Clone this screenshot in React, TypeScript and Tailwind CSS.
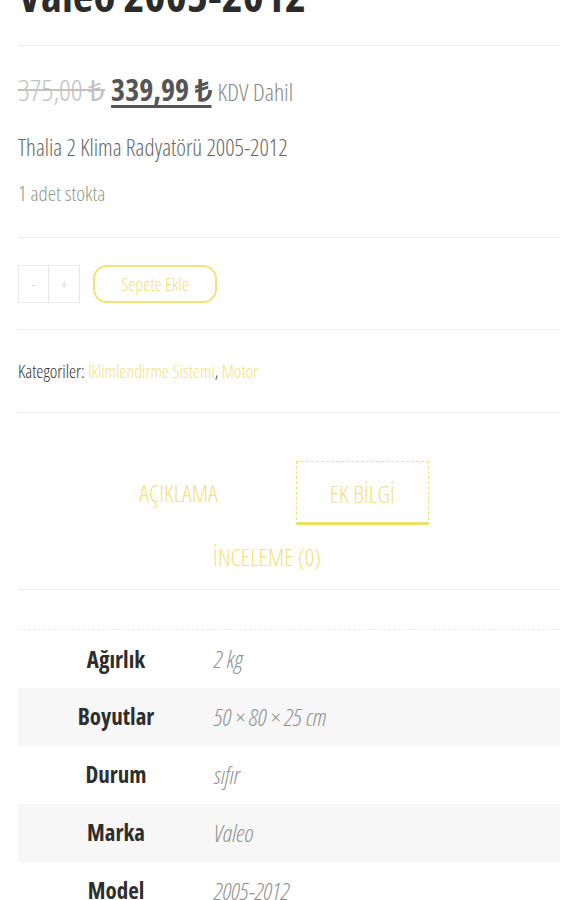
import React from "react";

const rows = [
  { label: "Ağırlık", value: "2 kg" },
  { label: "Boyutlar", value: "50 × 80 × 25 cm" },
  { label: "Durum", value: "sıfır" },
  { label: "Marka", value: "Valeo" },
  { label: "Model", value: "2005-2012" },
];

const tabs = ["AÇIKLAMA", "EK BİLGİ", "İNCELEME (0)"];

const App = () => {
  return (
    <div className="w-[578px] h-[900px] overflow-hidden bg-white font-['Open_Sans','Liberation_Sans_Narrow',sans-serif] [font-stretch:75%]">
      <div className="px-[18px]">
        <h1 className="-mt-[30px] pb-[25px] border-b border-[#eeeeee] text-[45px] leading-[50px] font-bold text-[#2b2b2b]">
          Valeo 2005-2012
        </h1>

        <div className="mt-[29px] flex items-baseline gap-[6px] leading-[30px]">
          <span className="text-[29px] font-light text-[#c2c2c2] line-through">375,00 ₺</span>
          <span className="text-[30px] font-bold text-[#555555] underline underline-offset-[4px]">339,99 ₺</span>
          <span className="text-[24px] font-light text-[#888888]">KDV Dahil</span>
        </div>

        <p className="mt-[26px] text-[23px] leading-[28px] font-light text-[#666666]">
          Thalia 2 Klima Radyatörü 2005-2012
        </p>
        <p className="mt-[20px] pb-[32px] border-b border-[#eeeeee] text-[21px] leading-[24px] font-light text-[#8c9c80]">
          1 adet stokta
        </p>

        <div className="mt-[27px] pb-[26px] border-b border-[#eeeeee] flex items-center gap-[13px]">
          <div className="flex h-[38px] border border-[#e8e8e8]">
            <button className="w-[30px] border-r border-[#e8e8e8] text-[15px] font-light text-[#cccccc]">-</button>
            <button className="w-[30px] text-[15px] font-light text-[#cccccc]">+</button>
          </div>
          <button className="h-[38px] w-[124px] rounded-[14px] border-2 border-[#f1e37a] text-[18px] font-light text-[#efdf6e]">
            Sepete Ekle
          </button>
        </div>

        <p className="mt-[31px] pb-[31px] border-b border-[#eeeeee] text-[18px] leading-[20px] font-light text-[#333333]">
          Kategoriler: <span className="text-[#f1e27a]">İklimlendirme Sistemi</span>, <span className="text-[#f1e27a]">Motor</span>
        </p>

        <div className="mt-[48px] border-b border-[#eeeeee] flex flex-wrap justify-center">
          {tabs.map((t) => (
            <div
              key={t}
              className={
                t === "EK BİLGİ"
                  ? "mr-[44px] px-[33px] h-[64px] flex items-center justify-center border border-dashed border-b-0 border-[#f1e27a] shadow-[inset_0_-3px_0_#ece06a] text-[24px] font-light text-[#f2e27c]"
                  : "mr-[44px] px-[33px] h-[64px] flex items-center justify-center border border-transparent text-[24px] font-light text-[#f2e27c]"
              }
            >
              {t}
            </div>
          ))}
        </div>

        <table className="mt-[39px] w-full border-collapse border-t border-dashed border-[#ececec]">
          <tbody>
            {rows.map((r, i) => (
              <tr key={r.label} className={i % 2 === 1 ? "bg-[#f7f7f7]" : "bg-white"}>
                <th className="w-[196px] h-[58px] text-center text-[23px] font-bold text-[#2e2e2e]">{r.label}</th>
                <td className="h-[58px] text-left text-[24px] font-light italic text-[#8f8f8f]">{r.value}</td>
              </tr>
            ))}
          </tbody>
        </table>
      </div>
    </div>
  );
};

export default App;
